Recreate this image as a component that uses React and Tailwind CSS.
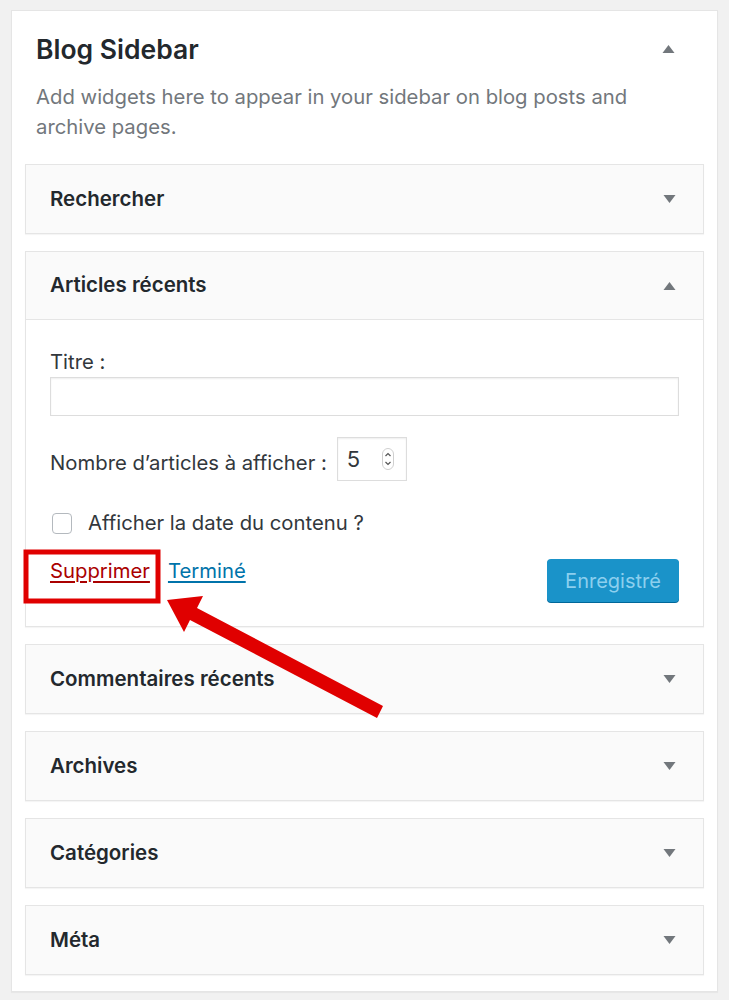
import React from "react";

const FONT = { fontFamily: "Inter, Roboto, 'Liberation Sans', sans-serif" };

const Caret = ({ up }) => (
  <svg width="13" height="10" viewBox="0 0 13 10" className="shrink-0">
    <path d={up ? "M6.5 1 L12.5 9 L0.5 9 Z" : "M0.5 1 L12.5 1 L6.5 9 Z"} fill="#72777c" />
  </svg>
);

const WidgetHeader = ({ title, open }) => (
  <div
    className={`flex h-[68px] items-center justify-between bg-[#fafafa] pl-[24px] pr-[27px] ${
      open ? "border-b border-[#e5e5e5]" : ""
    }`}
  >
    <span className="text-[20.5px] font-semibold text-[#23282d]">{title}</span>
    <Caret up={open} />
  </div>
);

const Widget = ({ title }) => (
  <div className="border border-[#e5e5e5] shadow-[0_1px_1px_rgba(0,0,0,0.04)]">
    <WidgetHeader title={title} />
  </div>
);

const Spinner = () => (
  <svg width="12" height="22" viewBox="0 0 12 22">
    <rect x="0.5" y="0.5" width="11" height="21" rx="5.5" fill="#fff" stroke="#cfcfcf" />
    <path d="M3.5 8 L6 5.5 L8.5 8" fill="none" stroke="#555" strokeWidth="1.2" />
    <path d="M3.5 14 L6 16.5 L8.5 14" fill="none" stroke="#555" strokeWidth="1.2" />
  </svg>
);

const RecentPosts = () => (
  <div className="border border-[#e5e5e5] bg-white shadow-[0_1px_1px_rgba(0,0,0,0.04)]">
    <WidgetHeader title="Articles récents" open />
    <div className="px-[24px] pt-[30px] pb-[24px] text-[20.3px]">
      <label className="block leading-[24px] text-[#32373c]">Titre :</label>
      <div className="mt-[3px] h-[39px] w-full border border-[#dddddd] shadow-[inset_0_1px_2px_rgba(0,0,0,0.07)]" />

      <div className="mt-[21px] flex items-center">
        <span className="pt-[8px] leading-[24px] text-[#32373c]">Nombre d’articles à afficher :</span>
        <div className="ml-[10px] flex h-[44px] w-[70px] items-center justify-between border border-[#dddddd] pl-[9px] pr-[12px] shadow-[inset_0_1px_2px_rgba(0,0,0,0.07)]">
          <span className="text-[22px] text-[#32373c]">5</span>
          <Spinner />
        </div>
      </div>

      <div className="mt-[30px] flex items-center">
        <div className="ml-[2px] h-[21px] w-[20px] rounded-[4px] border border-[#b4b9be] bg-white" />
        <span className="ml-[16px] leading-[24px] text-[#32373c]">Afficher la date du contenu ?</span>
      </div>

      <div className="mt-[24px] flex items-start justify-between">
        <div className="flex gap-[18px] leading-[24px]">
          <a className="text-[#a00] underline underline-offset-[3px]">Supprimer</a>
          <a className="text-[#0073aa] underline underline-offset-[3px]">Terminé</a>
        </div>
        <button className="h-[43px] w-[132px] rounded-[4px] bg-[#1a93c9] text-[20px] text-[#8ccfee] shadow-[0_1px_0_#006799]">
          Enregistré
        </button>
      </div>
    </div>
  </div>
);

export default function App() {
  return (
    <div className="relative h-[1000px] w-[729px] overflow-hidden bg-[#f1f1f1]" style={FONT}>
      <div className="ml-[11px] mt-[10px] w-[707px] border border-[#e5e5e5] bg-white pb-[16px] shadow-[0_1px_1px_rgba(0,0,0,0.04)]">
        <div className="px-[24px] pt-[22px]">
          <div className="flex items-center justify-between pr-[18px]">
            <h2 className="text-[26.5px] font-semibold leading-[32px] text-[#23282d]">Blog Sidebar</h2>
            <Caret up />
          </div>
          <p className="mt-[17px] text-[20.3px] leading-[30px] text-[#72777c]">
            Add widgets here to appear in your sidebar on blog posts and archive pages.
          </p>
        </div>
        <div className="mt-[22px] flex flex-col gap-[17px] px-[13px]">
          <Widget title="Rechercher" />
          <RecentPosts />
          <Widget title="Commentaires récents" />
          <Widget title="Archives" />
          <Widget title="Catégories" />
          <Widget title="Méta" />
        </div>
      </div>

      {/* annotation: red box + arrow */}
      <svg className="pointer-events-none absolute left-0 top-0" width="729" height="1000">
        <rect x="26" y="552" width="132" height="49" fill="none" stroke="#e00000" strokeWidth="5" />
        <polygon
          points="167,600 203,596 197,608 383,706 377,718 190,620 184,632"
          fill="#e00000"
        />
      </svg>
    </div>
  );
}
